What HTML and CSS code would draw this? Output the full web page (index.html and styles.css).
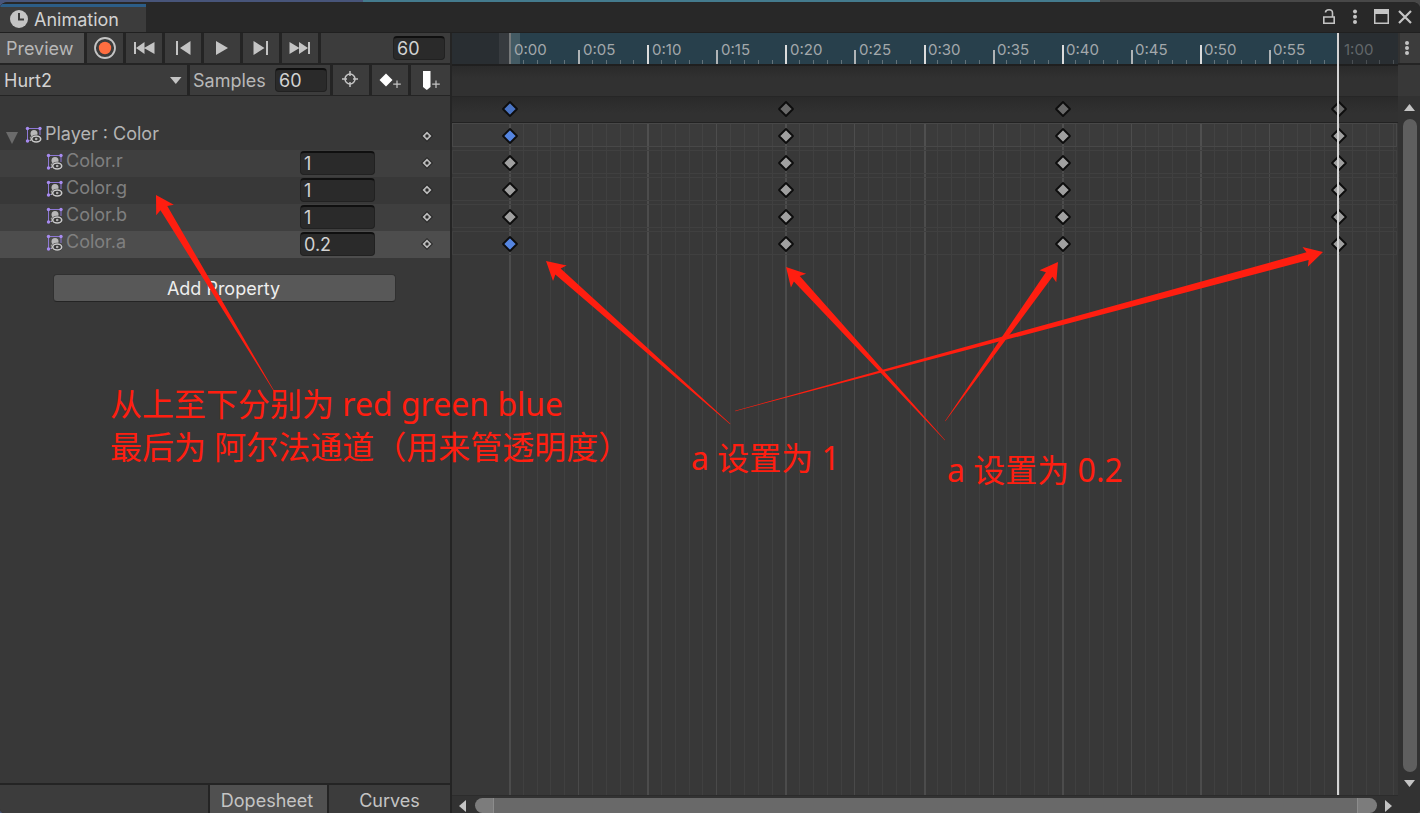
FILE: index.html
```html
<!DOCTYPE html>
<html lang="zh-CN">
<head>
<meta charset="utf-8">
<title>Animation</title>
<link rel="stylesheet" href="styles.css">
</head>
<body>
<svg class="defs" aria-hidden="true">
  <symbol id="sprite" viewBox="0 0 17 17">
    <path d="M2.500 15V2.500H15V9" fill="none" stroke="#8d78d4" stroke-width="1"/>
    <path d="M2.500 14.500H6" stroke="#6f5fa8" stroke-width="1"/>
    <circle cx="9" cy="7.500" r="3.500" fill="#b8b8b8"/>
    <path d="M5 15V11.500Q5.500 9.500 8 10L10 15Z" fill="#c4c4c4"/>
    <ellipse cx="11.200" cy="13" rx="5.800" ry="4.200" fill="#383838"/>
    <ellipse cx="11.200" cy="13" rx="4.500" ry="3" fill="none" stroke="#c8c8c8" stroke-width="1.600"/>
    <circle cx="11.200" cy="13" r="1.300" fill="#b0b0b0"/>
    <circle cx="2.500" cy="2.500" r="1.700" fill="#a78bf0"/>
    <circle cx="15" cy="2.500" r="1.700" fill="#a78bf0"/>
    <circle cx="2.500" cy="15" r="1.700" fill="#a78bf0"/>
  </symbol>
  <symbol id="key" viewBox="0 0 14 14">
    <path d="M7 1L13 7L7 13L1 7Z" fill="#272727"/>
    <path d="M7 2.500L11.500 7L7 11.500L2.500 7Z" fill="#bdbdbd"/>
    <circle cx="7" cy="7" r="1.700" fill="#2c2c2c"/>
  </symbol>
</svg>
<div class="window">
  <header class="titlebar">
    <button class="tab" type="button">
      <svg width="18" height="18" viewBox="0 0 18 18"><circle cx="9" cy="9" r="9" fill="#c4c4c4"/><path d="M9 3V9.500H14" fill="none" stroke="#3c3c3c" stroke-width="2"/></svg>
      Animation
    </button>
    <div class="window-buttons">
      <button type="button" aria-label="Lock"><svg width="14" height="18" viewBox="0 0 14 18"><path d="M1.800 9H12.200V15.200H1.800ZM3.500 4.500Q3.500 1.800 7 1.800Q10.500 1.800 10.500 5V9" fill="none" stroke="#c4c4c4" stroke-width="1.600"/></svg></button>
      <button type="button" aria-label="Menu"><svg width="6" height="18" viewBox="0 0 6 18"><g fill="#c4c4c4"><circle cx="3" cy="3.500" r="2"/><circle cx="3" cy="8.800" r="2"/><circle cx="3" cy="14" r="2"/></g></svg></button>
      <button type="button" aria-label="Maximize"><svg width="16" height="16" viewBox="0 0 16 16"><path d="M0 0H15V15H0ZM1.500 5V13.500H13.500V5Z" fill="#c4c4c4" fill-rule="evenodd"/></svg></button>
      <button type="button" aria-label="Close"><svg width="14" height="14" viewBox="0 0 14 14"><path d="M1 1L13 13M13 1L1 13" stroke="#c4c4c4" stroke-width="2.200"/></svg></button>
    </div>
  </header>

  <main class="editor">
    <section class="panel">
      <div class="toolbar">
        <button class="cell preview" type="button">Preview</button>
        <button class="cell tool" type="button" aria-label="Record"><svg viewBox="0 0 36 30"><circle cx="18" cy="15" r="10" fill="none" stroke="#c4c4c4" stroke-width="1.800"/><circle cx="18" cy="15" r="6.200" fill="#ff6e40"/></svg></button>
        <button class="cell tool" type="button" aria-label="First key"><svg viewBox="0 0 36 30"><path d="M8 9H10V21H8ZM10 15L18.500 9V21ZM18 15L28.500 9V21Z" fill="#c4c4c4"/></svg></button>
        <button class="cell tool" type="button" aria-label="Previous key"><svg viewBox="0 0 36 30"><path d="M11 8H13V22H11ZM15 15L25.500 8V22Z" fill="#c4c4c4"/></svg></button>
        <button class="cell tool" type="button" aria-label="Play"><svg viewBox="0 0 36 30"><path d="M12 8V22L24 15Z" fill="#c4c4c4"/></svg></button>
        <button class="cell tool" type="button" aria-label="Next key"><svg viewBox="0 0 36 30"><path d="M23 8H25V22H23ZM21.500 15L10.500 8V22Z" fill="#c4c4c4"/></svg></button>
        <button class="cell tool" type="button" aria-label="Last key"><svg viewBox="0 0 36 30"><path d="M26 9H28V21H26ZM26 15L17 9V21ZM17.500 15L7.500 9V21Z" fill="#c4c4c4"/></svg></button>
        <div class="cell frame"><input class="field short" type="text" value="60" aria-label="Current frame"></div>
      </div>
      <div class="toolbar second">
        <div class="cell clip">
          <select aria-label="Clip"><option>Hurt2</option></select>
          <svg class="caret" width="12" height="8" viewBox="0 0 12 8"><path d="M0 0H11.500L5.800 7Z" fill="#c4c4c4"/></svg>
        </div>
        <div class="cell samples"><label for="samples">Samples</label><input id="samples" class="field short" type="text" value="60"></div>
        <button class="cell tool" type="button" aria-label="Filter by selection"><svg viewBox="0 0 36 30"><g fill="none" stroke="#c4c4c4" stroke-width="1.500"><circle cx="17" cy="14" r="5"/><path d="M17 6V11M17 17V22M9 14H14M20 14H25"/></g></svg></button>
        <button class="cell tool" type="button" aria-label="Add keyframe"><svg viewBox="0 0 36 30"><path d="M14 8.500L20.500 15L14 21.500L7.500 15Z" fill="#fff"/><path d="M25 15.500V23M21.200 19.200H28.800" stroke="#c4c4c4" stroke-width="1.200"/></svg></button>
        <button class="cell tool last" type="button" aria-label="Add event"><svg viewBox="0 0 36 30"><path d="M12 6H19.500V22L15.800 25L12 22Z" fill="#fff"/><path d="M25 15.500V23M21.200 19.200H28.800" stroke="#c4c4c4" stroke-width="1.200"/></svg></button>
      </div>
      <div class="properties">
        <div class="row parent">
          <svg class="fold" viewBox="0 0 12 12"><path d="M0 0H12L6 12Z" fill="#6b6b6b"/></svg>
          <svg class="sprite"><use href="#sprite"/></svg><span class="name">Player : Color</span>
          <button class="key" type="button" aria-label="Player : Color key"><svg><use href="#key"/></svg></button>
        </div>
        <div class="row light">
          <svg class="sprite"><use href="#sprite"/></svg><label class="name" for="r">Color.r</label>
          <input class="field" id="r" type="text" value="1"><button class="key" type="button" aria-label="Color.r key"><svg><use href="#key"/></svg></button>
        </div>
        <div class="row">
          <svg class="sprite"><use href="#sprite"/></svg><label class="name" for="g">Color.g</label>
          <input class="field" id="g" type="text" value="1"><button class="key" type="button" aria-label="Color.g key"><svg><use href="#key"/></svg></button>
        </div>
        <div class="row light">
          <svg class="sprite"><use href="#sprite"/></svg><label class="name" for="b">Color.b</label>
          <input class="field" id="b" type="text" value="1"><button class="key" type="button" aria-label="Color.b key"><svg><use href="#key"/></svg></button>
        </div>
        <div class="row selected">
          <svg class="sprite"><use href="#sprite"/></svg><label class="name" for="a">Color.a</label>
          <input class="field" id="a" type="text" value="0.2"><button class="key" type="button" aria-label="Color.a key"><svg><use href="#key"/></svg></button>
        </div>
        <button class="add" type="button">Add Property</button>
      </div>
      <div class="modes">
        <div class="cell fill"></div>
        <button class="cell dopesheet" type="button">Dopesheet</button>
        <button class="cell curves" type="button">Curves</button>
      </div>
    </section>

    <section class="timeline">
      <div class="ruler"><div class="clip-range"></div><svg class="ticks" id="ticks"></svg><div class="times" id="times"></div></div>
      <div class="events"></div>
      <div class="summary"></div>
      <div class="sheet">
        <svg class="grid" id="grid"></svg>
        <div class="track head"></div><div class="track"></div><div class="track"></div><div class="track"></div><div class="track"></div>
      </div>
      <svg class="keys" id="keys"></svg>
      <div class="hscroll">
        <svg width="8" height="12" viewBox="0 0 8 12"><path d="M7 0V12L0 6Z" fill="#c4c4c4"/></svg>
        <div class="hthumb"></div>
        <svg width="8" height="12" viewBox="0 0 8 12"><path d="M0 0V12L7 6Z" fill="#c4c4c4"/></svg>
      </div>
    </section>

    <aside class="side">
      <button class="options" type="button" aria-label="Options"><svg width="6" height="16" viewBox="0 0 6 16"><g fill="#c4c4c4"><circle cx="3" cy="3" r="2"/><circle cx="3" cy="8" r="2"/><circle cx="3" cy="13" r="2"/></g></svg></button>
      <div class="gap"></div>
      <div class="vscroll">
        <svg width="12" height="7" viewBox="0 0 12 7"><path d="M0 7H11L5.500 0Z" fill="#c4c4c4"/></svg>
        <div class="vthumb"></div>
        <svg width="12" height="7" viewBox="0 0 12 7"><path d="M0 0H11L5.500 7Z" fill="#c4c4c4"/></svg>
      </div>
    </aside>
  </main>

  <div class="notes">
    <svg class="arrows" fill="#ff1e10">
      <polygon transform="translate(156 195) rotate(58.950)" points="0,0 17.500,-10.300 15.300,-4 230,-0.200 230,0.200 15.300,4 17.500,10.300"/>
      <polygon transform="translate(546 261) rotate(41.500)" points="0,0 18.500,-10.300 16,-4 246,-0.200 246,0.200 16,4 18.500,10.300"/>
      <polygon transform="translate(1323 252) rotate(164.870)" points="0,0 18.500,-10.300 16,-4 609,-0.200 609,0.200 16,4 18.500,10.300"/>
      <polygon transform="translate(786 267) rotate(47.430)" points="0,0 18.500,-10.300 16,-4 235,-0.200 235,0.200 16,4 18.500,10.300"/>
      <polygon transform="translate(1058 262) rotate(125.330)" points="0,0 17.500,-10.300 15.300,-4 195,-0.200 195,0.200 15.300,4 17.500,10.300"/>
    </svg>
    <p class="note order">从上至下分别为 red green blue<br>最后为 阿尔法通道（用来管透明度）</p>
    <p class="note opaque">a 设置为 1</p>
    <p class="note faded">a 设置为 0.2</p>
  </div>
</div>
<script src="timeline.js"></script>
</body>
</html>
```
FILE: styles.css
```css
* { box-sizing: border-box; }
body {
  margin: 0;
  font-family: Inter, "Liberation Sans", sans-serif;
  font-size: 18px;
  color: #c4c4c4;
  background: linear-gradient(90deg, #48557a 0 363px, #447b8e 363px 1100px, #484848 1100px);
}
button, input, select {
  font: inherit;
  color: inherit;
  border: 0;
  padding: 0;
  margin: 0;
  background: none;
}
svg { display: block; flex: none; }
.defs { position: absolute; width: 0; height: 0; }
.window {
  position: relative;
  height: 100vh;
  border-top: 2px solid transparent;
  background: #242424 padding-box;
  border-radius: 8px 8px 4px 4px;
  display: flex;
  flex-direction: column;
  overflow: hidden;
}
.titlebar {
  height: 31px;
  flex: none;
  display: flex;
  justify-content: space-between;
  align-items: stretch;
  background: #282828;
  border-bottom: 1px solid #202020;
  padding: 2px 8px 0 0;
}
.tab {
  display: flex;
  align-items: center;
  gap: 6px;
  width: 146px;
  padding-left: 10px;
  background: #3c3c3c;
  border-top: 3px solid #2c5d87;
  color: #d2d2d2;
}
.tab svg { margin-bottom: 2px; }
.window-buttons { display: flex; align-items: center; gap: 16px; padding-bottom: 2px; }
.window-buttons button:last-child { margin-left: -8px; }

.editor {
  flex: 1;
  min-height: 0;
  display: grid;
  grid-template-columns: 450px 1fr 22px;
}
.panel { display: flex; flex-direction: column; min-height: 0; }
.toolbar { display: flex; height: 32px; padding-bottom: 2px; gap: 3px; flex: none; }
.toolbar.second { height: 31px; padding-bottom: 1px; }
.cell { background: #3c3c3c; display: flex; align-items: center; }
.preview { width: 84px; padding-left: 6px; background: #505050; color: #b8b8b8; }
.tool { width: 36px; }
.tool svg { width: 36px; height: 30px; }
.tool.last { width: 39px; }
.frame { flex: 1; justify-content: flex-end; padding-right: 5px; }
.field {
  width: 75px;
  height: 24px;
  padding-left: 3px;
  background: #2a2a2a;
  border: 1px solid #212121;
  border-top: 2px solid #0f0f0f;
  border-radius: 4px;
  color: #d2d2d2;
}
.field.short { width: 52px; }
.clip { width: 187px; position: relative; }
.clip select { appearance: none; width: 100%; height: 100%; padding-left: 4px; color: #d2d2d2; }
.caret { position: absolute; right: 5px; top: 12px; pointer-events: none; }
.samples { flex: 1; justify-content: space-between; padding: 0 3px 0 3px; color: #b8b8b8; }

.properties {
  flex: 1;
  background: #383838;
  padding-top: 27px;
  display: flex;
  flex-direction: column;
}
.row { display: flex; align-items: center; height: 27px; padding: 0 16px 2px 46px; color: #808080; }
.row.parent { padding-left: 6px; color: #b4b4b4; }
.row.light { background: #3f3f3f; }
.row.selected { background: #4d4d4d; }
.fold { width: 12px; height: 12px; margin: 4px 7px 0 0; }
.sprite { width: 17px; height: 17px; margin: 0 3px 3px 0; }
.name { flex: 1; padding-bottom: 4px; }
.row .field { margin-right: 45px; }
.key svg { width: 14px; height: 14px; }
.add {
  height: 28px;
  margin: 16px 54px 0 53px;
  padding-right: 2px;
  background: #585858;
  border: 1px solid #303030;
  border-bottom-color: #242424;
  border-radius: 4px;
  color: #eee;
}
.modes { display: flex; gap: 2px; height: 30px; padding-top: 2px; flex: none; }
.modes .cell { justify-content: center; padding-top: 3px; }
.fill { flex: 1; }
.modes .dopesheet { width: 117px; padding-right: 3px; background: #505050; }
.curves { width: 121px; }

.timeline {
  position: relative;
  display: flex;
  flex-direction: column;
  min-width: 0;
  overflow: hidden;
  border-left: 2px solid #242424;
  background: #383838;
}
.ruler { position: relative; flex: none; height: 31px; background: linear-gradient(90deg, #292e32 47px, #373b3f 47px 58px, #292e32 58px); }
.clip-range { width: 829px; height: 31px; margin-left: 58px; background: linear-gradient(90deg, #435a63 10px, #28404c 10px); }
.ticks, .grid { position: absolute; left: 0; top: 0; width: 100%; height: 100%; }
.times { position: absolute; left: 62px; top: 8px; display: flex; font-size: 15px; line-height: 18px; color: #a3a8ab; }
.times span { width: 69px; flex: none; }
.times .outside { width: auto; padding-left: 2px; color: #62676a; }
.events { height: 32px; flex: none; border-top: 2px solid #1f1f1f; background: linear-gradient(#2a2a2a, #313131 12px); }
.summary { height: 27px; flex: none; border-top: 1px solid #262626; border-bottom: 1px solid #222; background: linear-gradient(#2a2a2a, #313131 16px); }
.sheet { position: relative; flex: 1; min-height: 0; display: flex; flex-direction: column; gap: 3px; }
.track { position: relative; height: 24px; margin-right: 1px; border: 1px solid #404040; }
.track.head { border: 1px solid #484848; background: rgba(255, 255, 255, 0.02); }
.keys { position: absolute; left: 0; top: 0; width: 100%; height: calc(100% - 18px); }
.hscroll { height: 18px; flex: none; display: flex; align-items: center; gap: 8px; padding: 2px 5px 0 7px; background: #323232; border-top: 1px solid #2c2c2c; }
.hthumb { flex: 1; height: 15px; border-radius: 8px; background: linear-gradient(90deg, #7c7c7c 18px, #8c8c8c 18px 19px, #696969 19px calc(100% - 20px), #8c8c8c calc(100% - 20px) calc(100% - 19px), #7c7c7c calc(100% - 19px)); }

.side { display: flex; flex-direction: column; background: #323232; min-height: 0; }
.options { height: 30px; flex: none; background: #3c3c3c; display: flex; align-items: center; justify-content: center; margin-left: 2px; padding-right: 6px; }
.gap { height: 33px; flex: none; border-top: 2px solid #242424; background: #383838; }
.vscroll { flex: 1; min-height: 0; display: flex; flex-direction: column; align-items: center; gap: 8px; padding: 8px 0 26px 2px; }
.vthumb { flex: 1; width: 14px; border-radius: 7px; background: #5f5f5f; }

.notes { position: absolute; left: 0; top: -2px; width: 100%; height: calc(100% + 2px); pointer-events: none; }
.arrows { width: 100%; height: 100%; }
.note {
  position: absolute;
  margin: 0;
  white-space: nowrap;
  font: 32px/43px "Noto Sans", "Noto Sans CJK SC", sans-serif;
  color: #ff1e10;
}
.order { left: 110px; top: 382px; }
.opaque { left: 691px; top: 436px; }
.faded { left: 947px; top: 448px; }
```
FILE: timeline.js
```js
const ORIGIN = 58;
const FRAME = 829 / 60;
const LAST = 60;
const FRAMES = 200;
const NS = "http://www.w3.org/2000/svg";

function add(parent, tag, attrs) {
  const el = document.createElementNS(NS, tag);
  for (const name in attrs) el.setAttribute(name, attrs[name]);
  parent.appendChild(el);
}

const frameX = f => Math.round(ORIGIN + f * FRAME);
const ticks = document.getElementById("ticks");
const grid = document.getElementById("grid");
const times = document.getElementById("times");
const keys = document.getElementById("keys");

for (let f = 0; f <= FRAMES; f++) {
  const x = frameX(f);
  const major = f % 10 === 0;
  const medium = f % 5 === 0;
  let top = major ? 12 : medium ? 17 : 27;
  let color = major ? "#dcdcdc" : medium ? "#b0b4b6" : "#64737a";
  if (f === 0) { top = 0; color = "#77797a"; }
  if (f > LAST) color = "#4a4f53";
  if (f !== LAST) {
    add(ticks, "rect", { x: x - 1, y: top, width: medium ? 2 : 1, height: 31 - top, fill: color });
  }
  add(grid, "rect", { x: x - 1, y: 0, width: major ? 2 : 1, height: "100%", fill: major ? "#4c4c4c" : medium ? "#4a4a4a" : "#404040" });
  if (medium && f <= LAST) {
    const label = document.createElement("span");
    label.textContent = Math.floor(f / 60) + ":" + String(f % 60).padStart(2, "0");
    if (f === LAST) label.className = "outside";
    times.appendChild(label);
  }
}

const rowCenters = [76, 103, 130, 157, 184, 211];
for (const f of [0, 20, 40, 60]) {
  rowCenters.forEach((y, row) => {
    let fill = row === 0 ? "#6a6a6a" : "#a0a0a0";
    if (f === 0 && row === 0) fill = "#4a74c4";
    if (f === 0 && (row === 1 || row === 5)) fill = "#5585e0";
    const x = frameX(f);
    add(keys, "path", { d: `M${x} ${y - 7}l7 7l-7 7l-7 -7z`, fill, stroke: "#0d0d0d", "stroke-width": 1.8, "stroke-linejoin": "round" });
  });
}
add(keys, "rect", { x: frameX(LAST) - 2, y: 0, width: 2, height: "100%", fill: "#d4d4d4" });
```
